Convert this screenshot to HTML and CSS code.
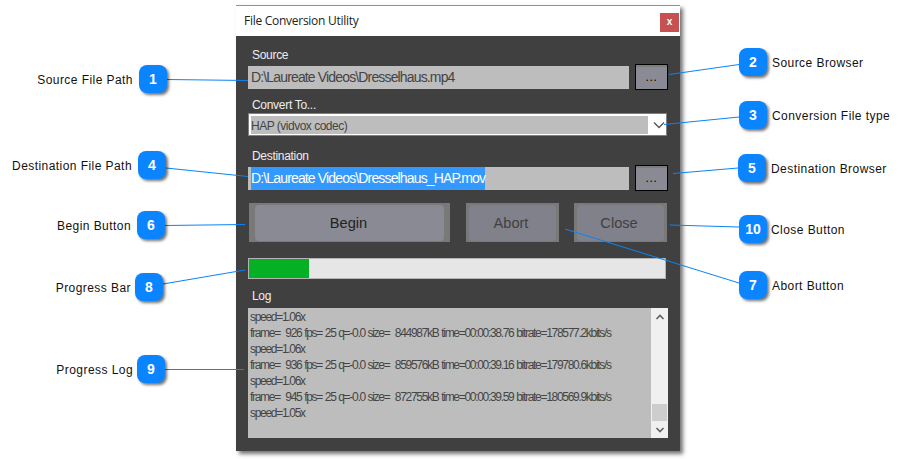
FILE: index.html
```html
<!DOCTYPE html>
<html lang="en">
<head>
<meta charset="utf-8">
<title>File Conversion Utility</title>
<link rel="stylesheet" href="styles.css">
</head>
<body>
<main class="canvas">
  <section class="window">
    <header class="titlebar">
      <h1 class="title">File Conversion Utility</h1>
      <button class="close-x" type="button">x</button>
    </header>
    <div class="content">
      <div class="label label-source">Source</div>
      <div class="path-row">
        <div class="field"><span class="field-text">D:\Laureate Videos\Dresselhaus.mp4</span></div>
        <button class="browse" type="button">...</button>
      </div>
      <div class="label label-convert">Convert To...</div>
      <div class="combo">
        <div class="combo-value">HAP (vidvox codec)</div>
        <svg class="combo-arrow" width="14" height="8" viewBox="0 0 14 8"><path d="M2 1.5 7 6.5 12 1.5" fill="none" stroke="#555" stroke-width="1.3"/></svg>
      </div>
      <div class="label label-dest">Destination</div>
      <div class="path-row">
        <div class="field"><span class="field-text selected">D:\Laureate Videos\Dresselhaus_HAP.mov</span></div>
        <button class="browse" type="button">...</button>
      </div>
      <div class="actions">
        <div class="action action-begin"><span class="action-face">Begin</span></div>
        <div class="action action-abort"><span class="action-face">Abort</span></div>
        <div class="action action-close"><span class="action-face">Close</span></div>
      </div>
      <div class="progress"><div class="progress-fill"></div></div>
      <div class="label label-log">Log</div>
      <div class="log">
        <div class="log-text">
          <div>speed=1.06x</div>
          <div>frame=&nbsp; 926 fps= 25 q=-0.0 size=&nbsp; 844987kB time=00:00:38.76 bitrate=178577.2kbits/s</div>
          <div>speed=1.06x</div>
          <div>frame=&nbsp; 936 fps= 25 q=-0.0 size=&nbsp; 859576kB time=00:00:39.16 bitrate=179780.6kbits/s</div>
          <div>speed=1.06x</div>
          <div>frame=&nbsp; 945 fps= 25 q=-0.0 size=&nbsp; 872755kB time=00:00:39.59 bitrate=180569.9kbits/s</div>
          <div>speed=1.05x</div>
        </div>
        <div class="scrollbar">
          <svg width="10" height="6" viewBox="0 0 10 6"><path d="M1.5 5 5 1.5 8.500 5" fill="none" stroke="#606060" stroke-width="1.6"/></svg>
          <div class="thumb"></div>
          <svg width="10" height="6" viewBox="0 0 10 6"><path d="M1.500 1 5 4.500 8.500 1" fill="none" stroke="#606060" stroke-width="1.6"/></svg>
        </div>
      </div>
    </div>
  </section>

  <svg class="leaders" width="905" height="459" viewBox="0 0 905 459">
    <g fill="none" stroke="#0a84f5" stroke-width="1">
      <path d="M167 79.500 248 80.500"/>
      <path d="M669 74.500 739 64.500"/>
      <path d="M664 124.500 739 117"/>
      <path d="M166 168 248 176.500"/>
      <path d="M673 173.500 738 168"/>
      <path d="M165 225.500 245 224.500"/>
      <path d="M565 229 739 283"/>
      <path d="M163 284 245 270"/>
      <path d="M165 369.500 244 369.500"/>
      <path d="M670 225 739 227"/>
    </g>
  </svg>

  <div class="badge b1">1</div>
  <div class="badge b2">2</div>
  <div class="badge b3">3</div>
  <div class="badge b4">4</div>
  <div class="badge b5">5</div>
  <div class="badge b6">6</div>
  <div class="badge b7">7</div>
  <div class="badge b8">8</div>
  <div class="badge b9">9</div>
  <div class="badge b10">10</div>

  <div class="note t1">Source File Path</div>
  <div class="note t2">Source Browser</div>
  <div class="note t3">Conversion File type</div>
  <div class="note t4">Destination File Path</div>
  <div class="note t5">Destination Browser</div>
  <div class="note t6">Begin Button</div>
  <div class="note t7">Abort Button</div>
  <div class="note t8">Progress Bar</div>
  <div class="note t9">Progress Log</div>
  <div class="note t10">Close Button</div>
</main>
</body>
</html>
```
FILE: styles.css
```css
* { box-sizing: border-box; }
html, body { margin: 0; padding: 0; background: #fff; }
body { width: 905px; height: 459px; overflow: hidden; font-family: "Liberation Sans", Arial, sans-serif; }
.canvas { position: relative; width: 905px; height: 459px; }

.window {
  position: absolute; left: 236px; top: 5px; width: 444px; height: 446px;
  display: flex; flex-direction: column; background: #404040;
  box-shadow: 3px 3px 4px rgba(0,0,0,.55);
}
.titlebar {
  height: 31px; flex: none; background: #fff; border-top: 1px solid #8a93a3;
  display: flex; align-items: flex-start; justify-content: space-between;
  padding: 7px 1px 0 8px;
}
.title { margin: 0; font: 400 12px/16px "Open Sans", sans-serif; color: #222; letter-spacing: -.27px; }
.close-x {
  width: 19px; height: 19px; border: 0; padding: 0 0 2px; background: #c75050; color: #fff;
  font: 700 10px/14px "Liberation Sans", sans-serif;
}

.content { flex: 1; display: flex; flex-direction: column; padding: 0 12px; }
.label { font-size: 12px; line-height: 14px; color: #eee; padding-left: 4px; letter-spacing: -.3px; }
.label-source { margin-top: 12px; }
.label-convert { margin-top: 8px; }
.label-dest { margin-top: 13px; }
.label-log { margin-top: 10px; }

.path-row { display: flex; align-items: center; margin-top: 2px; height: 26px; }
.field { width: 381px; height: 23px; background: #bdbdbd; padding-left: 3px; display: flex; }
.field-text { font-size: 14px; line-height: 23px; color: #444; letter-spacing: -.85px; white-space: nowrap; }
.field-text.selected { background: #3399ff; color: #fff; }
.browse {
  width: 33px; height: 26px; margin-left: 6px; background: #8a8a94; border: 1px solid #000;
  box-shadow: inset 0 2px 0 #7d7d7d; color: #000; font: 400 12px/25px "Liberation Sans", sans-serif; padding: 0;
  letter-spacing: .6px;
}

.combo {
  width: 419px; height: 23px; margin-top: 1px; background: #fff; border: 1px solid #808080;
  display: flex; align-items: center; padding: 2px 0 2px 2px;
}
.combo-value { width: 397px; height: 18px; background: #bdbdbd; font-size: 12px; line-height: 20px; color: #444; letter-spacing: -.5px; }
.combo-arrow { margin-left: 4px; }

.actions { display: flex; margin-top: 12px; padding-left: 1px; height: 39px; }
.action { height: 39px; background: #797979; padding: 2px 3px 1px; display: flex; }
.action-begin { width: 201px; padding-left: 6px; padding-right: 6px; color: #222; }
.action-abort { width: 93px; margin-left: 16px; color: #404040; }
.action-close { width: 93px; margin-left: 15px; color: #404040; }
.action-face {
  flex: 1; background: #8a8a94; border-radius: 4px; font-size: 14.6px; line-height: 36px; text-align: center; padding-right: 2px;
}
.action-abort .action-face, .action-close .action-face { background: #81818b; padding-right: 3px; }

.progress { width: 418px; height: 21px; margin-top: 16px; background: #e6e6e6; border: 1px solid #b4b4b4; }
.progress-fill { width: 60px; height: 100%; background: #06b025; }

.log { width: 420px; height: 130px; margin-top: 5px; background: #bdbdbd; display: flex; }
.log-text { flex: 1; padding: 1px 0 0 2px; font-size: 12px; line-height: 16px; color: #454545; letter-spacing: -1.3px; word-spacing: .7px; white-space: nowrap; overflow: hidden; }
.scrollbar { width: 17px; flex: none; background: #f0f0f0; display: flex; flex-direction: column; align-items: center; padding: 6px 0 5px; }
.thumb { width: 15px; height: 17px; background: #cdcdcd; margin-top: auto; margin-bottom: 6px; }

.leaders { position: absolute; left: 0; top: 0; pointer-events: none; }

.badge {
  position: absolute; width: 28px; height: 28px; border-radius: 8px; background: #0a84ff; color: #fff;
  font: 700 14px/28px "Liberation Sans", sans-serif; text-align: center;
  box-shadow: 2px 2px 3px rgba(0,0,0,.55);
}
.b1 { left: 139px; top: 65px; }
.b2 { left: 739px; top: 48px; }
.b3 { left: 739px; top: 101px; }
.b4 { left: 138px; top: 151px; }
.b5 { left: 738px; top: 154px; }
.b6 { left: 137px; top: 211px; }
.b7 { left: 739px; top: 271px; }
.b8 { left: 135px; top: 273px; }
.b9 { left: 137px; top: 355px; }
.b10 { left: 739px; top: 215px; }

.note { position: absolute; font-size: 12px; line-height: 16px; color: #111; white-space: nowrap; letter-spacing: .44px; }
.t1 { right: 772px; top: 72px; }
.t2 { left: 772px; top: 55px; }
.t3 { left: 772px; top: 108px; }
.t4 { right: 773px; top: 158px; }
.t5 { left: 771px; top: 161px; }
.t6 { right: 774px; top: 218px; }
.t7 { left: 772px; top: 278px; }
.t8 { right: 774px; top: 280px; }
.t9 { right: 772px; top: 362px; }
.t10 { left: 771px; top: 222px; }
```
